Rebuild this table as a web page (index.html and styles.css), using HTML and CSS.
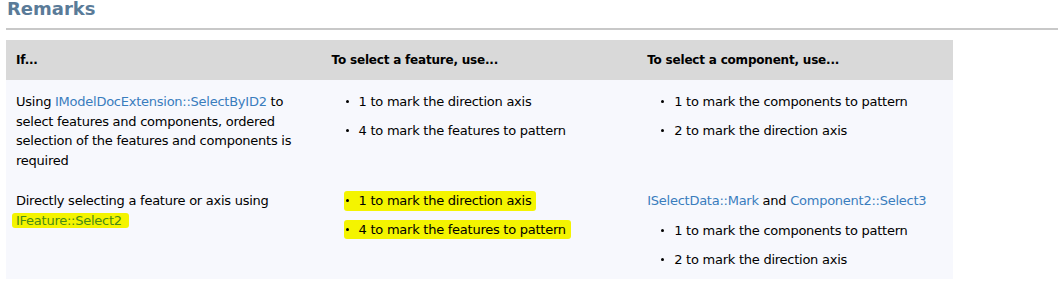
FILE: index.html
```html
<!DOCTYPE html>
<html>
<head>
<meta charset="utf-8">
<link rel="stylesheet" href="styles.css">
</head>
<body>
<div class="page">
  <h2 class="title">Remarks</h2>
  <table class="remarks">
    <thead>
      <tr>
        <th>If...</th>
        <th>To select a feature, use...</th>
        <th>To select a component, use...</th>
      </tr>
    </thead>
    <tbody>
      <tr>
        <td>Using <a class="link" href="#">IModelDocExtension::SelectByID2</a> to select features and components, ordered selection of the features and components is required</td>
        <td>
          <ul class="list">
            <li class="item">1 to mark the direction axis</li>
            <li class="item">4 to mark the features to pattern</li>
          </ul>
        </td>
        <td>
          <ul class="list">
            <li class="item">1 to mark the components to pattern</li>
            <li class="item">2 to mark the direction axis</li>
          </ul>
        </td>
      </tr>
      <tr class="last">
        <td>Directly selecting a feature or axis using <a class="link hl-link" href="#">IFeature::Select2</a></td>
        <td>
          <ul class="list">
            <li class="item hl">1 to mark the direction axis</li>
            <li class="item hl">4 to mark the features to pattern</li>
          </ul>
        </td>
        <td>
          <p class="lead"><a class="link" href="#">ISelectData::Mark</a> and <a class="link" href="#">Component2::Select3</a></p>
          <ul class="list">
            <li class="item">1 to mark the components to pattern</li>
            <li class="item">2 to mark the direction axis</li>
          </ul>
        </td>
      </tr>
    </tbody>
  </table>
</div>
</body>
</html>
```

FILE: styles.css
```css
html, body {
  margin: 0;
  padding: 0;
  background: #ffffff;
}

body {
  font-family: "DejaVu Sans", Verdana, sans-serif;
  font-size: 13px;
  line-height: 19.5px;
  letter-spacing: -0.25px;
  color: #000000;
}

.page {
  padding: 0 6px;
}

.title {
  margin: 0;
  padding: 0 0 10px 1px;
  font-size: 18px;
  line-height: 18px;
  font-weight: bold;
  letter-spacing: 0;
  color: #5a7b98;
  border-bottom: 2px solid #c8c8c8;
}

.remarks {
  margin-top: 10px;
  width: 90%;
  table-layout: fixed;
  border-collapse: collapse;
  border-spacing: 0;
}

.remarks th {
  background: #d9d9d9;
  text-align: left;
  font-weight: bold;
  font-size: 12px;
  letter-spacing: -0.2px;
  height: 40px;
  padding: 2px 10px 0 10px;
  box-sizing: border-box;
  vertical-align: middle;
}

.remarks td {
  background: #f7f8fd;
  vertical-align: top;
  padding: 12px 10px 9px 10px;
}

.remarks .last td {
  padding-bottom: 10px;
}

.link {
  color: #3a7dbd;
  text-decoration: none;
}

.hl-link {
  background: #f4f400;
  color: #4a8a14;
  padding: 0 7px 0 4px;
  margin-left: -4px;
  border-radius: 3px;
}

.lead {
  margin: 0 0 10.5px 0;
}

.list {
  margin: 0;
  padding: 0;
  list-style: none;
}

.item {
  margin: 9px 0 0 14px;
}

.item:first-child {
  margin-top: 0;
}

.item::before {
  content: "";
  display: inline-block;
  width: 3px;
  height: 3px;
  border-radius: 50%;
  background: #000000;
  vertical-align: middle;
  margin-right: 10px;
  position: relative;
  top: -1px;
}

.item.hl {
  width: fit-content;
  background: #f4f400;
  margin-left: 12px;
  padding: 0 5px 0 2px;
  border-radius: 3px;
}
```
